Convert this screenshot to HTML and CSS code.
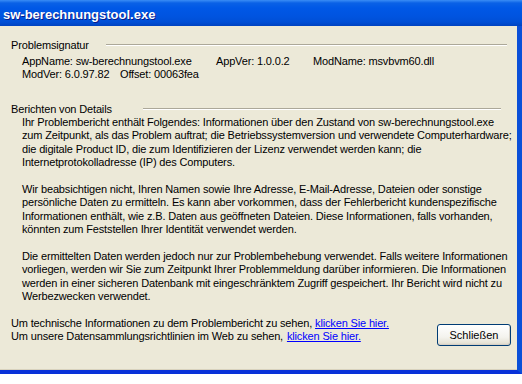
FILE: index.html
```html
<!DOCTYPE html>
<html lang="de">
<head>
<meta charset="utf-8">
<title>sw-berechnungstool.exe</title>
<link rel="stylesheet" href="styles.css">
</head>
<body>
<div class="window">
  <div class="titlebar"><span class="title">sw-berechnungstool.exe</span></div>
  <div class="frame">
    <div class="group-head sig-head">
      <span class="group-label">Problemsignatur</span>
      <span class="group-line"></span>
    </div>
    <div class="sig">
      <div class="sig-row">
        <span class="c-appname">AppName: sw-berechnungstool.exe</span>
        <span class="c-appver">AppVer: 1.0.0.2</span>
        <span>ModName: msvbvm60.dll</span>
      </div>
      <div class="sig-row">
        <span class="c-modver">ModVer: 6.0.97.82</span>
        <span>Offset: 00063fea</span>
      </div>
    </div>

    <div class="group-head det-head">
      <span class="group-label">Berichten von Details</span>
      <span class="group-line"></span>
    </div>
    <div class="details">
      <p>Ihr Problembericht enthält Folgendes: Informationen über den Zustand von sw-berechnungstool.exe<br>zum Zeitpunkt, als das Problem auftrat; die Betriebssystemversion und verwendete Computerhardware;<br>die digitale Product ID, die zum Identifizieren der Lizenz verwendet werden kann; die<br>Internetprotokolladresse (IP) des Computers.</p>
      <p>Wir beabsichtigen nicht, Ihren Namen sowie Ihre Adresse, E-Mail-Adresse, Dateien oder sonstige<br>persönliche Daten zu ermitteln. Es kann aber vorkommen, dass der Fehlerbericht kundenspezifische<br>Informationen enthält, wie z.B. Daten aus geöffneten Dateien. Diese Informationen, falls vorhanden,<br>könnten zum Feststellen Ihrer Identität verwendet werden.</p>
      <p>Die ermittelten Daten werden jedoch nur zur Problembehebung verwendet. Falls weitere Informationen<br>vorliegen, werden wir Sie zum Zeitpunkt Ihrer Problemmeldung darüber informieren. Die Informationen<br>werden in einer sicheren Datenbank mit eingeschränktem Zugriff gespeichert. Ihr Bericht wird nicht zu<br>Werbezwecken verwendet.</p>
    </div>

    <div class="bottom">
      <div class="links">
        <div>Um technische Informationen zu dem Problembericht zu sehen, <a class="link-1" href="#">klicken Sie hier.</a></div>
        <div>Um unsere Datensammlungsrichtlinien im Web zu sehen, <a class="link-2" href="#">klicken Sie hier.</a></div>
      </div>
      <button class="btn" type="button">Schließen</button>
    </div>
  </div>
</div>
</body>
</html>
```

FILE: styles.css
```css
html, body {
  margin: 0;
  padding: 0;
  background: #ffffff;
}

.window {
  width: 522px;
  font-family: "Liberation Sans", Arial, sans-serif;
  font-size: 11px;
  letter-spacing: -0.15px;
  color: #000;
}

.titlebar {
  height: 26px;
  display: flex;
  align-items: center;
  padding-left: 3px;
  background: linear-gradient(to bottom, #3a8df5 0px, #0a61e6 3px, #0058e6 8px, #0054e0 16px, #004fd6 22px, #0043c0 26px);
}

.title {
  color: #ffffff;
  font-weight: bold;
  font-size: 13px;
  letter-spacing: 0;
  text-shadow: 1px 1px 0 #0a1c8a;
  margin-top: 2px;
}

.frame {
  background: #ece9d8;
  border-right: 5px solid #0a4fd8;
  border-bottom: 4px solid #0831d9;
  box-shadow: inset 0 -1px 0 #d8d2bd;
  height: 331px;
  box-sizing: content-box;
  padding-top: 13px;
  display: flex;
  flex-direction: column;
  line-height: 13.2px;
}

.group-head {
  display: flex;
  align-items: center;
  padding-left: 11px;
}

.group-label {
  flex: none;
}

.sig-head .group-label { width: 95px; }
.sig-head { padding-right: 10px; }
.det-head .group-label { width: 132px; }
.det-head { padding-right: 16px; margin-top: 21px; }

.group-line {
  flex: 1;
  height: 1px;
  background: #aca899;
  border-bottom: 1px solid #ffffff;
  margin-top: -1px;
}

.sig {
  padding-left: 22px;
  margin-top: 3px;
}

.sig-row {
  display: flex;
  white-space: nowrap;
}

.c-appname { width: 194px; }
.c-appver { width: 97px; }
.c-modver { width: 98px; }

.details {
  padding-left: 22px;
  white-space: nowrap;
  line-height: 13.4px;
}

.details p {
  margin: 0 0 13.4px 0;
}

.bottom {
  display: flex;
  align-items: flex-end;
  justify-content: space-between;
  padding-left: 11px;
  padding-right: 6px;
  white-space: nowrap;
}

.links a {
  color: #0000ff;
  text-decoration: underline;
}

.link-1 { margin-left: 0; }
.link-2 { margin-left: 1px; }

.btn {
  width: 74px;
  height: 22px;
  margin-bottom: -3px;
  font-family: "Liberation Sans", Arial, sans-serif;
  font-size: 11px;
  color: #000;
  border: 1px solid #003c74;
  border-radius: 3px;
  background: linear-gradient(to bottom, #ffffff 0%, #f4f3ee 60%, #e6e3d6 90%, #d6d0c5 100%);
  box-shadow: inset -1px -1px 0 #d6d0c5;
  padding: 0;
}
```
